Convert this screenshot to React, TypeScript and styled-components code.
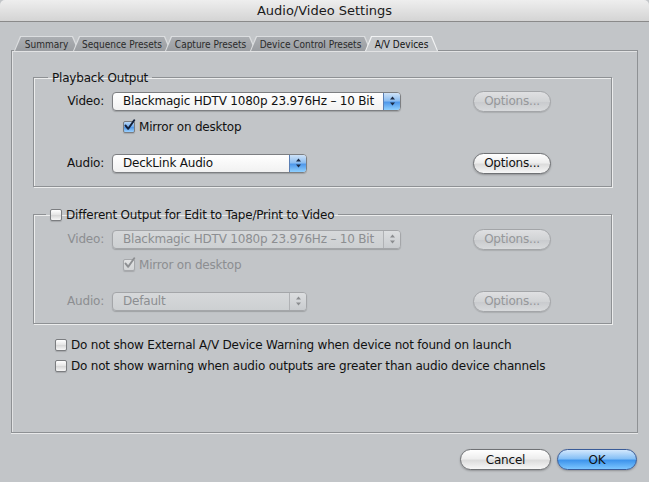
import React from 'react';
import styled, { createGlobalStyle } from 'styled-components';

const GlobalStyle = createGlobalStyle`
  *, *::before, *::after { box-sizing: border-box; }
  html, body { margin: 0; padding: 0; background: #c2c5c8; }
  body {
    font-family: 'DejaVu Sans', 'Liberation Sans', sans-serif;
    font-size: 12px;
    letter-spacing: -0.2px;
    color: #111;
  }
`;

const tabs = [
  { label: 'Summary', w: 65 },
  { label: 'Sequence Presets', w: 98 },
  { label: 'Capture Presets', w: 91 },
  { label: 'Device Control Presets', w: 121 },
  { label: 'A/V Devices', w: 73, active: true },
];

const Check = ({ checked, disabled }: { checked?: boolean; disabled?: boolean }) => (
  <CheckBox $checked={checked} $disabled={disabled}>
    {checked && (
      <svg width="13" height="13" viewBox="0 0 13 13">
        <path
          d="M2.6 6.6 L5.2 9.8 L11.2 1.2"
          fill="none"
          stroke={disabled ? '#8d8f92' : '#14203a'}
          strokeWidth="2"
          strokeLinecap="round"
          strokeLinejoin="round"
        />
      </svg>
    )}
  </CheckBox>
);

const Arrows = ({ disabled }: { disabled?: boolean }) => (
  <svg width="7" height="10" viewBox="0 0 7 10">
    <path d="M3.5 0.5 L6 3.5 L1 3.5 Z" fill={disabled ? '#8a8c8f' : '#1b2a44'} />
    <path d="M3.5 9.5 L6 6.5 L1 6.5 Z" fill={disabled ? '#8a8c8f' : '#1b2a44'} />
  </svg>
);

const Popup = ({ value, width, disabled }: { value: string; width: number; disabled?: boolean }) => (
  <PopupBox $w={width} $disabled={disabled}>
    <PopupText>{value}</PopupText>
    <Stepper $disabled={disabled}>
      <Arrows disabled={disabled} />
    </Stepper>
  </PopupBox>
);

const DeviceRows = ({ disabled, audio, top }: { disabled?: boolean; audio: string; top: number }) => (
  <>
    <Row $mt={top}>
      <Label $disabled={disabled}>Video:</Label>
      <Popup value="Blackmagic HDTV 1080p 23.976Hz – 10 Bit" width={289} disabled={disabled} />
      <Button $w={78} disabled>
        Options...
      </Button>
    </Row>
    <Row $mt={4}>
      <span />
      <CheckLine $indent={11} $disabled={disabled}>
        <Check checked disabled={disabled} />
        Mirror on desktop
      </CheckLine>
      <span />
    </Row>
    <Row $mt={14}>
      <Label $disabled={disabled}>Audio:</Label>
      <Popup value={audio} width={195} disabled={disabled} />
      <Button $w={78} disabled={disabled}>
        Options...
      </Button>
    </Row>
  </>
);

const App = () => (
  <Window>
    <GlobalStyle />
    <TitleBar>Audio/Video Settings</TitleBar>
    <Content>
      <TabStrip>
        {tabs.map((t) => (
          <Tab key={t.label} $w={t.w} $active={t.active}>
            <TabFace $active={t.active}>{t.label}</TabFace>
          </Tab>
        ))}
      </TabStrip>
      <Panel>
        <Group $mt={19} $pb={12}>
          <Legend $ml={14}>Playback Output</Legend>
          <DeviceRows audio="DeckLink Audio" top={5} />
        </Group>
        <Group $mt={20} $pb={11}>
          <Legend $ml={12}>
            <Check />
            Different Output for Edit to Tape/Print to Video
          </Legend>
          <DeviceRows disabled audio="Default" top={6} />
        </Group>
        <Options>
          <CheckLine>
            <Check />
            Do not show External A/V Device Warning when device not found on launch
          </CheckLine>
          <CheckLine>
            <Check />
            Do not show warning when audio outputs are greater than audio device channels
          </CheckLine>
        </Options>
      </Panel>
      <Footer>
        <Button $w={91}>Cancel</Button>
        <Button $w={80} $primary>
          OK
        </Button>
      </Footer>
    </Content>
  </Window>
);

const Window = styled.div`
  width: 649px;
  height: 482px;
  background: #c2c5c8;
  display: flex;
  flex-direction: column;
  overflow: hidden;
`;

const TitleBar = styled.div`
  height: 22px;
  flex: none;
  display: flex;
  align-items: center;
  justify-content: center;
  border-bottom: 1px solid #8a8a8a;
  border-radius: 5px 5px 0 0;
  background: linear-gradient(#eeeeee, #d4d4d4);
  font-size: 13px;
  letter-spacing: 0;
  color: #1a1a1a;
`;

const Content = styled.div`
  padding: 14px 11px 0 11px;
  display: flex;
  flex-direction: column;
`;

const TabStrip = styled.div`
  display: flex;
  height: 15px;
  padding-left: 3px;
  margin-bottom: -1px;
  position: relative;
  z-index: 1;
`;

const Tab = styled.div<{ $w: number; $active?: boolean }>`
  width: ${(p) => p.$w}px;
  height: 15px;
  padding: 0 1px;
  margin-left: -6px;
  position: relative;
  z-index: ${(p) => (p.$active ? 2 : 1)};
  background: ${(p) => (p.$active ? '#f2f3f4' : '#dcdee0')};
  clip-path: polygon(6px 0, calc(100% - 6px) 0, 100% 100%, 0 100%);
  &:first-child {
    margin-left: 0;
  }
`;

const TabFace = styled.div<{ $active?: boolean }>`
  height: 14px;
  margin-top: 1px;
  display: flex;
  align-items: center;
  justify-content: center;
  white-space: nowrap;
  clip-path: polygon(6px 0, calc(100% - 6px) 0, 100% 100%, 0 100%);
  background: ${(p) => (p.$active ? '#c4c7ca' : 'linear-gradient(#abaeb2, #9b9ea2)')};
  font-family: 'DejaVu Sans Condensed', 'DejaVu Sans', sans-serif;
  font-stretch: condensed;
  font-size: 10px;
  letter-spacing: 0;
  color: ${(p) => (p.$active ? '#111' : '#2a2a2a')};
`;

const Panel = styled.div`
  height: 383px;
  border: 1px solid #8e9194;
  box-shadow: 0 1px 0 #e8e9ea, inset 1px 1px 0 #e2e3e4;
  padding: 0 25px 0 21px;
  display: flex;
  flex-direction: column;
`;

const Group = styled.fieldset<{ $mt: number; $pb: number }>`
  margin: ${(p) => p.$mt}px 0 0 0;
  padding: 0 0 ${(p) => p.$pb}px 0;
  min-width: 0;
  border: 1px solid #8e9194;
  box-shadow: inset 1px 1px 0 #eceded, 1px 1px 0 #eceded;
`;

const Legend = styled.legend<{ $ml: number }>`
  margin-left: ${(p) => p.$ml}px;
  padding: 0 4px;
  height: 15px;
  display: flex;
  align-items: center;
  gap: 4px;
  font-size: 12px;
  color: #111;
`;

const Row = styled.div<{ $mt: number }>`
  display: grid;
  grid-template-columns: 78px 361px 78px;
  align-items: center;
  height: 22px;
  margin-top: ${(p) => p.$mt}px;
`;

const Label = styled.span<{ $disabled?: boolean }>`
  text-align: right;
  padding-right: 8px;
  color: ${(p) => (p.$disabled ? '#8c8e91' : '#111')};
`;

const PopupBox = styled.div<{ $w: number; $disabled?: boolean }>`
  width: ${(p) => p.$w}px;
  height: 19px;
  display: flex;
  align-items: stretch;
  border: 1px solid ${(p) => (p.$disabled ? '#a4a6a9' : '#7d7f82')};
  border-radius: 4px;
  overflow: hidden;
  background: ${(p) =>
    p.$disabled ? 'linear-gradient(#d6d8da, #cdd0d2)' : 'linear-gradient(#ffffff, #f1f1f1)'};
  box-shadow: 0 1px 1px rgba(0, 0, 0, 0.18);
  color: ${(p) => (p.$disabled ? '#8c8e91' : '#111')};
`;

const PopupText = styled.span`
  flex: 1;
  display: flex;
  align-items: center;
  padding-left: 10px;
  white-space: nowrap;
  overflow: hidden;
`;

const Stepper = styled.span<{ $disabled?: boolean }>`
  width: 17px;
  display: flex;
  align-items: center;
  justify-content: center;
  border-left: 1px solid ${(p) => (p.$disabled ? '#b0b2b5' : '#5a7fb4')};
  background: ${(p) =>
    p.$disabled
      ? 'linear-gradient(#dcdee0, #c9cccf)'
      : 'linear-gradient(#cfe3f8, #8cbdf0 45%, #4f98ea 55%, #8fd0ff)'};
`;

const CheckBox = styled.span<{ $checked?: boolean; $disabled?: boolean }>`
  width: 12px;
  height: 12px;
  flex: none;
  position: relative;
  border: 1px solid ${(p) => (p.$disabled ? '#a6a8ab' : '#7b7d80')};
  border-radius: 2px;
  background: ${(p) =>
    p.$checked && !p.$disabled
      ? 'linear-gradient(#bcd9f7, #6aa8ee 50%, #4b93e6 51%, #9cd2ff)'
      : p.$disabled
        ? 'linear-gradient(#e2e3e4, #d2d4d6)'
        : 'linear-gradient(#ffffff, #e4e4e4 50%, #d6d6d6 51%, #f6f6f6)'};
  box-shadow: 0 1px 1px rgba(0, 0, 0, 0.15);
  svg {
    position: absolute;
    left: -1px;
    top: -3px;
  }
`;

const CheckLine = styled.label<{ $indent?: number; $disabled?: boolean }>`
  display: flex;
  align-items: center;
  gap: 4px;
  padding-left: ${(p) => p.$indent ?? 0}px;
  white-space: nowrap;
  color: ${(p) => (p.$disabled ? '#8c8e91' : '#111')};
`;

const Options = styled.div`
  display: flex;
  flex-direction: column;
  gap: 7px;
  margin: 14px 0 0 22px;
`;

const Button = styled.button<{ $w: number; $primary?: boolean }>`
  width: ${(p) => p.$w}px;
  height: 21px;
  padding: 0;
  border-radius: 11px;
  font-family: inherit;
  font-size: 12px;
  letter-spacing: -0.2px;
  border: 1px solid ${(p) => (p.$primary ? '#3a5c98' : '#6f7174')};
  color: #111;
  background: ${(p) =>
    p.$primary
      ? 'linear-gradient(#d3e8fd, #86c0f6 45%, #3f95ec 55%, #7cc6ff)'
      : 'linear-gradient(#ffffff, #eeeeee 45%, #dcdcdc 55%, #f7f7f7)'};
  box-shadow: 0 1px 2px rgba(0, 0, 0, 0.25);
  &:disabled {
    border-color: #a3a5a8;
    color: #95979a;
    background: linear-gradient(#dfe0e2, #d1d3d5 50%, #c8cacd 51%, #d8dadc);
    box-shadow: 0 1px 1px rgba(0, 0, 0, 0.12);
  }
`;

const Footer = styled.div`
  display: flex;
  justify-content: flex-end;
  gap: 6px;
  margin: 16px 1px 0 0;
`;

export default App;
